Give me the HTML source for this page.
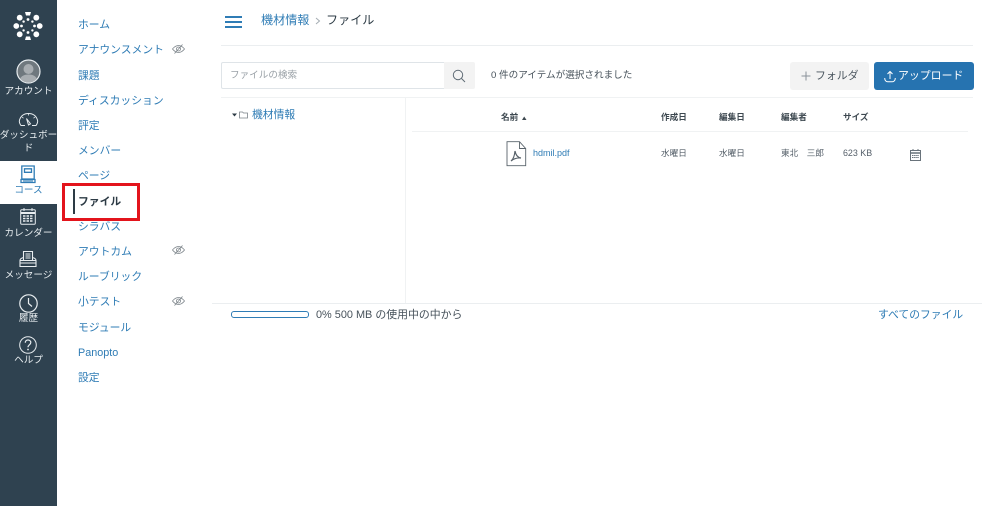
<!DOCTYPE html>
<html lang="ja"><head><meta charset="utf-8"><title>ファイル</title>
<style>
html,body{margin:0;padding:0;background:#fff}
body{width:1000px;height:506px;position:relative;overflow:hidden;font-family:"Liberation Sans","Noto Sans CJK JP",sans-serif;color:#3d4850}
.t{position:absolute;white-space:nowrap;line-height:14px}
#side{position:absolute;left:0;top:0;width:57px;height:506px;background:#2f4250}
#act{position:absolute;left:0;top:161px;width:57px;height:43px;background:#fff}
.s{position:absolute;left:-6px;width:69px;text-align:center;color:#e8edf0;font-size:9.6px;line-height:13px;white-space:nowrap}
.m{position:absolute;left:78px;font-size:10.8px;line-height:14px;color:#2f7cb5;white-space:nowrap}
.i{position:absolute}
.l{position:absolute;background:#ebeef0}
.h{font-size:8.6px;font-weight:bold;color:#3d4850}
.c{font-size:8.6px;color:#56606a}
</style></head><body>
<div id="side"></div><div id="act"></div>

<svg class="i" style="left:13px;top:11px" width="30" height="30" viewBox="0 0 30 30" fill="#fff">
<path d="M12 1h6l-1 3.500h-4zM12 29h6l-1-3.500h-4z"/>
<circle cx="3.300" cy="15" r="2.900"/><circle cx="26.700" cy="15" r="2.900"/>
<circle cx="6.700" cy="6.700" r="2.900"/><circle cx="23.300" cy="6.700" r="2.900"/><circle cx="6.700" cy="23.300" r="2.900"/><circle cx="23.300" cy="23.300" r="2.900"/>
<circle cx="15" cy="8.500" r="1.400"/><circle cx="15" cy="21.500" r="1.400"/><circle cx="8.500" cy="15" r="1.400"/><circle cx="21.500" cy="15" r="1.400"/>
<circle cx="10.600" cy="10.600" r="1.200"/><circle cx="19.400" cy="10.600" r="1.200"/><circle cx="10.600" cy="19.400" r="1.200"/><circle cx="19.400" cy="19.400" r="1.200"/>
</svg>

<svg class="i" style="left:16px;top:59px" width="25" height="25" viewBox="0 0 25 25">
<defs><clipPath id="av"><circle cx="12.500" cy="12.500" r="11"/></clipPath></defs>
<circle cx="12.500" cy="12.500" r="11.500" fill="#6f787e" stroke="#e8edf0" stroke-width="1.200"/>
<g clip-path="url(#av)" fill="#a8adb1"><circle cx="12.500" cy="10" r="5"/><path d="M3 25c0-7 4-9.500 9.500-9.500S22 18 22 25z"/></g>
</svg>
<div class="s" style="top:85px">アカウント</div>

<svg class="i" style="left:18px;top:112px" width="21" height="15" viewBox="0 0 21 15" fill="none" stroke="#e8edf0" stroke-width="1">
<path d="M7 13.500H3C1.500 11.500 1 10 1.500 8 3 3.500 6.500 1.500 10.500 1.500S18 3.500 19.500 8c.500 2 0 3.500-1.500 5.500h-4"/><path d="M8.500 6.500l2 6.500 2-1.200z"/><path d="M10.500 1.500v2M4 5l1.500 1.200M17 5l-1.500 1.200" stroke-width=".8"/>
</svg>
<div class="s" style="top:129px">ダッシュボー</div>
<div class="s" style="top:142px">ド</div>

<svg class="i" style="left:20px;top:165px" width="16" height="19" viewBox="0 0 16 19" fill="none" stroke="#2f7cb5" stroke-width="1.300">
<path d="M1.800 1h12.400v13H1.800zM1 14.500h14v3H1z"/><path d="M4.500 3.800h7v3.500h-7z"/><path d="M3 16h10" stroke-width="1"/>
</svg>
<div class="s" style="top:184px;color:#2f7cb5">コース</div>

<svg class="i" style="left:20px;top:208px" width="16" height="17" viewBox="0 0 16 17" fill="none" stroke="#e8edf0" stroke-width="1">
<rect x=".7" y="1.800" width="14.600" height="14.500" rx="1"/><path d="M.7 5h14.600" stroke-width="2"/><path d="M4 0v3M12 0v3"/>
<path d="M3 8h10M3 10.500h10M3 13h10" stroke-width="1.500" stroke-dasharray="2.500 1"/>
</svg>
<div class="s" style="top:227px">カレンダー</div>

<svg class="i" style="left:19px;top:250px" width="18" height="18" viewBox="0 0 18 18" fill="none" stroke="#e8edf0" stroke-width="1.100">
<path d="M4.500 10V1.500h9V10"/><path d="M6.500 4h5M6.500 6h5M6.500 8h5"/><path d="M4.500 7.500C2.500 8 1 9 1 10.500V16.500h16v-6c0-1.500-1.500-2.500-3.500-3"/><path d="M1 10.500h16M1 13h16"/>
</svg>
<div class="s" style="top:269px">メッセージ</div>

<svg class="i" style="left:19px;top:294px" width="19" height="19" viewBox="0 0 19 19" fill="none" stroke="#e8edf0" stroke-width="1.200">
<circle cx="9.500" cy="9.500" r="8.700"/><path d="M9.500 4v5.500l3.500 3"/>
</svg>
<div class="s" style="top:312px">履歴</div>

<svg class="i" style="left:19px;top:336px" width="18" height="18" viewBox="0 0 18 18" fill="none" stroke="#e8edf0" stroke-width="1">
<circle cx="9" cy="9" r="8.300"/><path d="M6.300 6.800C6.300 5 7.500 4 9 4s2.800 1 2.800 2.500c0 2.300-2.800 2.300-2.800 4.700" stroke-width="1.200"/><circle cx="9" cy="13.500" r=".9" fill="#e8edf0" stroke="none"/>
</svg>
<div class="s" style="top:354px">ヘルプ</div>

<div class="m" style="top:18px">ホーム</div>
<div class="m" style="top:43px">アナウンスメント</div>
<div class="m" style="top:69px">課題</div>
<div class="m" style="top:94px">ディスカッション</div>
<div class="m" style="top:119px">評定</div>
<div class="m" style="top:144px">メンバー</div>
<div class="m" style="top:169px">ページ</div>
<div class="m" style="top:195px;color:#2d3b45;font-weight:bold">ファイル</div>
<div class="m" style="top:220px">シラバス</div>
<div class="m" style="top:245px">アウトカム</div>
<div class="m" style="top:270px">ルーブリック</div>
<div class="m" style="top:295px">小テスト</div>
<div class="m" style="top:321px">モジュール</div>
<div class="m" style="top:346px">Panopto</div>
<div class="m" style="top:371px">設定</div>

<svg width="0" height="0" style="position:absolute"><defs><g id="eye" fill="none" stroke="#7b8389" stroke-width=".8"><path d="M.5 5c2-2.500 4-3.500 6-3.500s4 1 6 3.500c-2 2.500-4 3.500-6 3.500s-4-1-6-3.500z"/><circle cx="6.500" cy="5" r="2"/><path d="M2.500 9.500L10.500.5"/></g></defs></svg>
<svg class="i" style="left:172px;top:44px" width="13" height="10"><use href="#eye"/></svg>
<svg class="i" style="left:172px;top:245px" width="13" height="10"><use href="#eye"/></svg>
<svg class="i" style="left:172px;top:296px" width="13" height="10"><use href="#eye"/></svg>

<div class="i" style="left:73px;top:189px;width:1.500px;height:25px;background:#2d3b45"></div>
<div class="i" style="left:62px;top:183px;width:72px;height:32px;border:3px solid #e3141c"></div>

<div class="i" style="left:225px;top:16px;width:17px;height:1.500px;background:#2f7cb5"></div>
<div class="i" style="left:225px;top:21px;width:17px;height:1.500px;background:#2f7cb5"></div>
<div class="i" style="left:225px;top:26px;width:17px;height:1.500px;background:#2f7cb5"></div>
<div class="t" style="left:261px;top:13px;font-size:12.100px;color:#2f7cb5">機材情報</div>
<svg class="i" style="left:315px;top:17px" width="6" height="8"><path d="M1 1l3.500 3L1 7" fill="none" stroke="#a5adb3"/></svg>
<div class="t" style="left:326px;top:13px;font-size:12.100px;color:#2d3b45">ファイル</div>
<div class="l" style="left:221px;top:45px;width:752px;height:1px"></div>

<div class="i" style="left:221px;top:62px;width:222px;height:25px;border:1px solid #dfe4e8;border-radius:2px 0 0 2px"></div>
<div class="t" style="left:230px;top:69px;font-size:9.600px;color:#9aa1a7">ファイルの検索</div>
<div class="i" style="left:444px;top:62px;width:31px;height:27px;background:#f3f3f3;border-radius:0 2px 2px 0"></div>
<svg class="i" style="left:452px;top:69px" width="14" height="14" fill="none" stroke="#5f6b75" stroke-width="1"><circle cx="6" cy="6" r="4.700"/><path d="M9.500 9.500L13 13"/></svg>
<div class="t" style="left:491px;top:69px;font-size:9.600px;color:#46515a">0 件のアイテムが選択されました</div>
<div class="i" style="left:790px;top:62px;width:79px;height:28px;background:#f3f3f3;border-radius:3px"></div>
<svg class="i" style="left:801px;top:71px" width="10" height="10" stroke="#8a9299" stroke-width="1"><path d="M5 .5v9M.5 5h9"/></svg>
<div class="t" style="left:815px;top:69px;font-size:10.900px;color:#4a555e">フォルダ</div>
<div class="i" style="left:874px;top:62px;width:100px;height:28px;background:#2673b0;border-radius:3px"></div>
<svg class="i" style="left:884px;top:70px" width="12" height="13" fill="none" stroke="#fff" stroke-width="1"><path d="M6 9V1.500M3.500 4L6 1.500 8.500 4M.7 8c0 2.500 1.500 3.800 3 3.800h4.600c1.500 0 3-1.300 3-3.800"/></svg>
<div class="t" style="left:898px;top:69px;font-size:10.900px;color:#fff">アップロード</div>
<div class="l" style="left:221px;top:97px;width:752px;height:1px;background:#f0f2f3"></div>
<div class="l" style="left:405px;top:98px;width:1px;height:205px;background:#f0f2f3"></div>

<svg class="i" style="left:232px;top:112px" width="6" height="6"><path d="M0 1.500h5L2.500 4.500z" fill="#2d3b45"/></svg>
<svg class="i" style="left:239px;top:110px" width="9" height="9" fill="none" stroke="#7b8389" stroke-width=".8"><path d="M.5 2h3l1 1h4v5h-8z"/></svg>
<div class="t" style="left:252px;top:108px;font-size:10.800px;color:#2f7cb5">機材情報</div>

<div class="t h" style="left:501px;top:110px">名前</div>
<svg class="i" style="left:522px;top:116px" width="5" height="5"><path d="M0 4h4.500L2.200 .5z" fill="#3d4850"/></svg>
<div class="t h" style="left:661px;top:110px">作成日</div>
<div class="t h" style="left:719px;top:110px">編集日</div>
<div class="t h" style="left:781px;top:110px">編集者</div>
<div class="t h" style="left:843px;top:110px">サイズ</div>
<div class="l" style="left:412px;top:131px;width:556px;height:1px;background:#f0f2f3"></div>

<svg class="i" style="left:506px;top:141px" width="21" height="26" fill="none" stroke="#59636b" stroke-width=".9">
<path d="M1 .7h12.500L19.700 7.500V24.700H1z"/><path d="M13.500 .7V7.500h6.200"/><path d="M5 20c2-1.500 3.500-5 4-10 .800 4 2.500 6.500 6 7-3-.300-7 .500-10 3z" stroke-width="1.200"/>
</svg>
<div class="t" style="left:533px;top:146px;font-size:9px;color:#2f7cb5">hdmil.pdf</div>
<div class="t c" style="left:661px;top:146px">水曜日</div>
<div class="t c" style="left:719px;top:146px">水曜日</div>
<div class="t c" style="left:781px;top:146px">東北　三郎</div>
<div class="t c" style="left:843px;top:146px;font-size:8.900px">623 KB</div>
<svg class="i" style="left:910px;top:149px" width="11" height="12" fill="none" stroke="#69737b" stroke-width="1"><rect x=".5" y="1.500" width="10" height="10"/><path d="M.5 4h10" stroke-width="1.500"/><path d="M2 6.500h7M2 8.500h7" stroke-dasharray="1.500 .6"/><path d="M3 0v2M8 0v2"/></svg>

<div class="l" style="left:212px;top:303px;width:770px;height:1px"></div>
<div class="i" style="left:231px;top:311px;width:76px;height:5px;border:1px solid #2f7cb5;border-radius:3px"></div>
<div class="t" style="left:316px;top:308px;font-size:10.900px;color:#46515a">0% 500 MB の使用中の中から</div>
<div class="t" style="left:878px;top:308px;font-size:10.800px;color:#2f7cb5">すべてのファイル</div>
</body></html>
